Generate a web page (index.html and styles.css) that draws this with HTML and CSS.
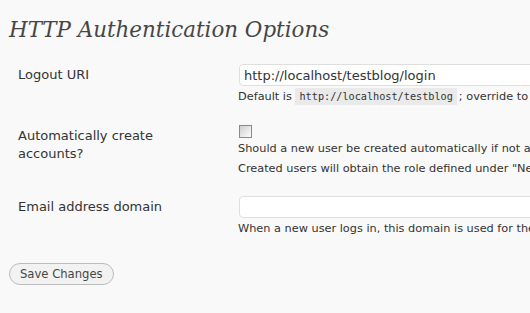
FILE: index.html
```html
<!DOCTYPE html>
<html lang="en">

<head>
    <meta charset="UTF-8">
    <title>HTTP Authentication Options</title>
    <link rel="stylesheet" href="styles.css">
</head>

<body>
    <div class="wrap">
        <h2>HTTP Authentication Options</h2>

        <form method="post" action="options.php">
            <div class="form-table">
                <div class="form-row">
                    <label for="logout_uri">Logout URI</label>
                    <div class="field">
                        <input type="text" id="logout_uri" class="regular-text" value="http://localhost/testblog/login">
                        <p class="description">Default is <code>http://localhost/testblog</code>; override to use an external logout page.</p>
                    </div>
                </div>
                <div class="form-row">
                    <label for="auto_create">Automatically create<br>accounts?</label>
                    <div class="field">
                        <span class="checkbox" id="auto_create"></span>
                        <p class="description">Should a new user be created automatically if not already in the WordPress database?</p>
                        <p class="description">Created users will obtain the role defined under "New User Default Role" on the General Options page.</p>
                    </div>
                </div>
                <div class="form-row">
                    <label for="email_domain">Email address domain</label>
                    <div class="field">
                        <input type="text" id="email_domain" class="regular-text" value="">
                        <p class="description">When a new user logs in, this domain is used for the email address.</p>
                    </div>
                </div>
            </div>

            <p class="submit">
                <button type="submit" class="button">Save Changes</button>
            </p>
        </form>
    </div>
</body>

</html>
```

FILE: styles.css
```css
html {
    overflow: hidden;
}

body {
    font-family: 'DejaVu Sans', Verdana, sans-serif;
    font-size: 13px;
    color: #333;
    margin: 0;
    padding: 0;
    background-color: #f9f9f9;
}

.wrap {
    padding: 0 0 0 9px;
}

h2 {
    font-family: 'DejaVu Serif', Georgia, serif;
    font-style: italic;
    font-weight: normal;
    font-size: 21.4px;
    line-height: 29px;
    color: #464646;
    margin: 0;
    padding: 15px 0 0;
}

.form-table {
    margin-top: 11px;
}

.form-row {
    display: grid;
    grid-template-columns: 220px auto;
    padding: 9px 0 9px 9px;
}

.form-row:first-child {
    padding-bottom: 10px;
}

.form-row label {
    padding-top: 2px;
    line-height: 18px;
}

.field {
    white-space: nowrap;
}

.regular-text {
    display: block;
    width: 320px;
    height: 22px;
    box-sizing: border-box;
    margin: 0 0 0 1px;
    padding: 2px 4px;
    border: 1px solid #dfdfdf;
    border-radius: 4px;
    background-color: #fff;
    font-family: 'DejaVu Sans', Verdana, sans-serif;
    font-size: 13px;
    color: #333;
}

.description {
    font-size: 11.3px;
    line-height: 19px;
    margin: 1px 0 0;
}

code {
    font-family: 'DejaVu Sans Mono', Consolas, monospace;
    font-size: 10.2px;
    background-color: #eaeaea;
    padding: 3px 4px;
    margin-right: 2px;
}

.checkbox {
    display: block;
    width: 13px;
    height: 13px;
    box-sizing: border-box;
    margin: 0 0 1px 1px;
    border: 1px solid #8a8a8a;
    background: linear-gradient(135deg, #cfcfcf, #fdfdfd);
}

.submit {
    margin: 0;
    padding: 16px 0 0;
}

.button {
    font-family: 'DejaVu Sans', Verdana, sans-serif;
    font-size: 11.6px;
    color: #464646;
    background-color: #f2f2f2;
    border: 1px solid #bbb;
    border-radius: 11px;
    padding: 4px 10px 3px;
    line-height: 13px;
    cursor: pointer;
}
```
